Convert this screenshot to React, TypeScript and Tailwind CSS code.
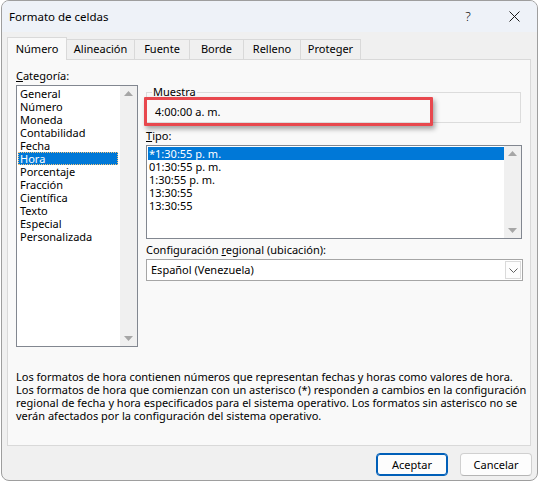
const categories = [
  'General',
  'Número',
  'Moneda',
  'Contabilidad',
  'Fecha',
  'Hora',
  'Porcentaje',
  'Fracción',
  'Científica',
  'Texto',
  'Especial',
  'Personalizada',
]

const types = ['*1:30:55 p. m.', '01:30:55 p. m.', '1:30:55 p. m.', '13:30:55', '13:30:55']

const tabs = [
  { label: 'Número', width: 'w-[60px]', active: true },
  { label: 'Alineación', width: 'w-[68px]', active: false },
  { label: 'Fuente', width: 'w-[55px]', active: false },
  { label: 'Borde', width: 'w-[54px]', active: false },
  { label: 'Relleno', width: 'w-[57px]', active: false },
  { label: 'Proteger', width: 'w-[60px]', active: false },
]

function Arrow({ down }: { down?: boolean }) {
  return (
    <svg width="9" height="5" viewBox="0 0 9 5" className="fill-[#a6a6a6]">
      {down ? <polygon points="0,0 9,0 4.5,5" /> : <polygon points="0,5 9,5 4.5,0" />}
    </svg>
  )
}

function ScrollBar() {
  return (
    <div className="flex w-[17px] flex-col items-center justify-between bg-[#f0f0f0] py-[5px]">
      <Arrow />
      <Arrow down />
    </div>
  )
}

export default function App() {
  return (
    <div className="h-[484px] w-[540px] bg-white font-['Noto_Sans',sans-serif] text-[11px] text-black">
      <div className="ml-[1px] flex h-[481px] w-[537px] flex-col overflow-hidden rounded-[8px] border border-[#9e9e9e] bg-[#f0f0f0]">
        {/* title bar */}
        <div className="flex h-[31px] shrink-0 items-center bg-[#eef2f8] pl-[7px]">
          <span className="text-[11.5px] leading-[16px]">Formato de celdas</span>
          <div className="ml-auto flex h-full">
            <div className="flex w-[46px] items-center justify-center text-[13px] font-light">?</div>
            <div className="flex w-[46px] items-center justify-center">
              <svg width="11" height="11" viewBox="0 0 11 11" className="stroke-[#1a1a1a]">
                <line x1="0.5" y1="0.5" x2="10.5" y2="10.5" strokeWidth="1" />
                <line x1="10.5" y1="0.5" x2="0.5" y2="10.5" strokeWidth="1" />
              </svg>
            </div>
          </div>
        </div>

        {/* tabs */}
        <div className="flex h-[27px] shrink-0 items-end pl-[5px] pt-[5px]">
          {tabs.map((tab) =>
            tab.active ? (
              <div
                key={tab.label}
                className={`relative z-10 -mb-[1px] flex h-[23px] items-center justify-center border border-b-0 border-[#d9d9d9] bg-[#f9f9f9] pt-[1px] ${tab.width}`}
              >
                {tab.label}
              </div>
            ) : (
              <div
                key={tab.label}
                className={`flex h-[20px] items-center justify-center border-r border-t border-[#d9d9d9] bg-[#f0f0f0] ${tab.width}`}
              >
                {tab.label}
              </div>
            ),
          )}
        </div>

        {/* panel */}
        <div className="mx-[5px] flex h-[387px] w-[524px] shrink-0 flex-col border border-[#d9d9d9] bg-[#f9f9f9] px-[8px] pt-[8px]">
          <div className="flex gap-[8px]">
            {/* left column */}
            <div className="flex w-[123px] flex-col">
              <div className="leading-[16px]">
                <u>C</u>ategoría:
              </div>
              <div className="mt-[1px] flex h-[262px] border border-[#828790] bg-white">
                <div className="flex-1 pl-[1px] pr-[2px] pt-[1px]">
                  {categories.map((c) =>
                    c === 'Hora' ? (
                      <div
                        key={c}
                        className="h-[13px] bg-[#0078d7] pl-[2px] leading-[13px] text-white outline outline-1 -outline-offset-1 outline-dotted outline-[#f6c67c]"
                      >
                        {c}
                      </div>
                    ) : (
                      <div key={c} className="h-[13px] pl-[2px] leading-[13px]">
                        {c}
                      </div>
                    ),
                  )}
                </div>
                <ScrollBar />
              </div>
            </div>

            {/* right column */}
            <div className="flex w-[376px] flex-col">
              <div className="relative mt-[24px] h-[31px] w-[375px] border border-[#dcdcdc] pl-[8px] pt-[11px] leading-[16px]">
                <span className="absolute -top-[9px] left-[5px] bg-[#f9f9f9] px-[1px] leading-[16px]">Muestra</span>
                4:00:00 a. m.
                <div className="absolute -left-[3px] top-[4px] h-[29px] w-[289px] rounded-[1px] border-[3px] border-[#e8484e] shadow-[2px_3px_5px_rgba(0,0,0,0.35)]" />
              </div>

              <div className="mt-[5px] leading-[16px]">
                <u>T</u>ipo:
              </div>
              <div className="mt-[1px] flex h-[94px] w-[376px] border border-[#828790] bg-white">
                <div className="flex-1 pl-[1px] pt-[1px]">
                  {types.map((t, i) =>
                    i === 0 ? (
                      <div key={i} className="h-[13px] bg-[#0078d7] pl-[1px] leading-[13px] text-white">
                        {t}
                      </div>
                    ) : (
                      <div key={i} className="h-[13px] pl-[1px] leading-[13px]">
                        {t}
                      </div>
                    ),
                  )}
                </div>
                <ScrollBar />
              </div>

              <div className="mt-[3px] leading-[16px]">
                Configuración <u>r</u>egional (ubicación):
              </div>
              <div className="mt-[1px] flex h-[22px] w-[377px] items-center border border-[#a6a6a6] bg-white">
                <span className="flex-1 pl-[4px] leading-[16px]">Español (Venezuela)</span>
                <div className="mr-[1px] flex h-[18px] w-[16px] items-center justify-center border border-[#dadada] bg-[#fdfdfd]">
                  <svg width="9" height="5" viewBox="0 0 9 5" fill="none" className="stroke-[#606060]">
                    <polyline points="0.5,0.5 4.5,4.5 8.5,0.5" strokeWidth="1" />
                  </svg>
                </div>
              </div>
            </div>
          </div>

          <p className="mt-[23px] whitespace-nowrap leading-[13px]">
            Los formatos de hora contienen números que representan fechas y horas como valores de hora.
            <br />
            Los formatos de hora que comienzan con un asterisco (*) responden a cambios en la configuración
            <br />
            regional de fecha y hora especificados para el sistema operativo. Los formatos sin asterisco no se
            <br />
            verán afectados por la configuración del sistema operativo.
          </p>
        </div>

        {/* buttons */}
        <div className="mt-[7px] flex justify-end gap-[12px] pr-[5px]">
          <button
            type="button"
            className="h-[23px] w-[72px] rounded-[4px] border border-[#005fb8] bg-[#fdfdfd] leading-[16px] shadow-[inset_0_0_0_1px_#005fb8]"
          >
            Aceptar
          </button>
          <button
            type="button"
            className="h-[23px] w-[72px] rounded-[4px] border border-[#d0d0d0] border-b-[#b5b5b5] bg-[#fdfdfd] leading-[16px]"
          >
            Cancelar
          </button>
        </div>
      </div>
    </div>
  )
}
